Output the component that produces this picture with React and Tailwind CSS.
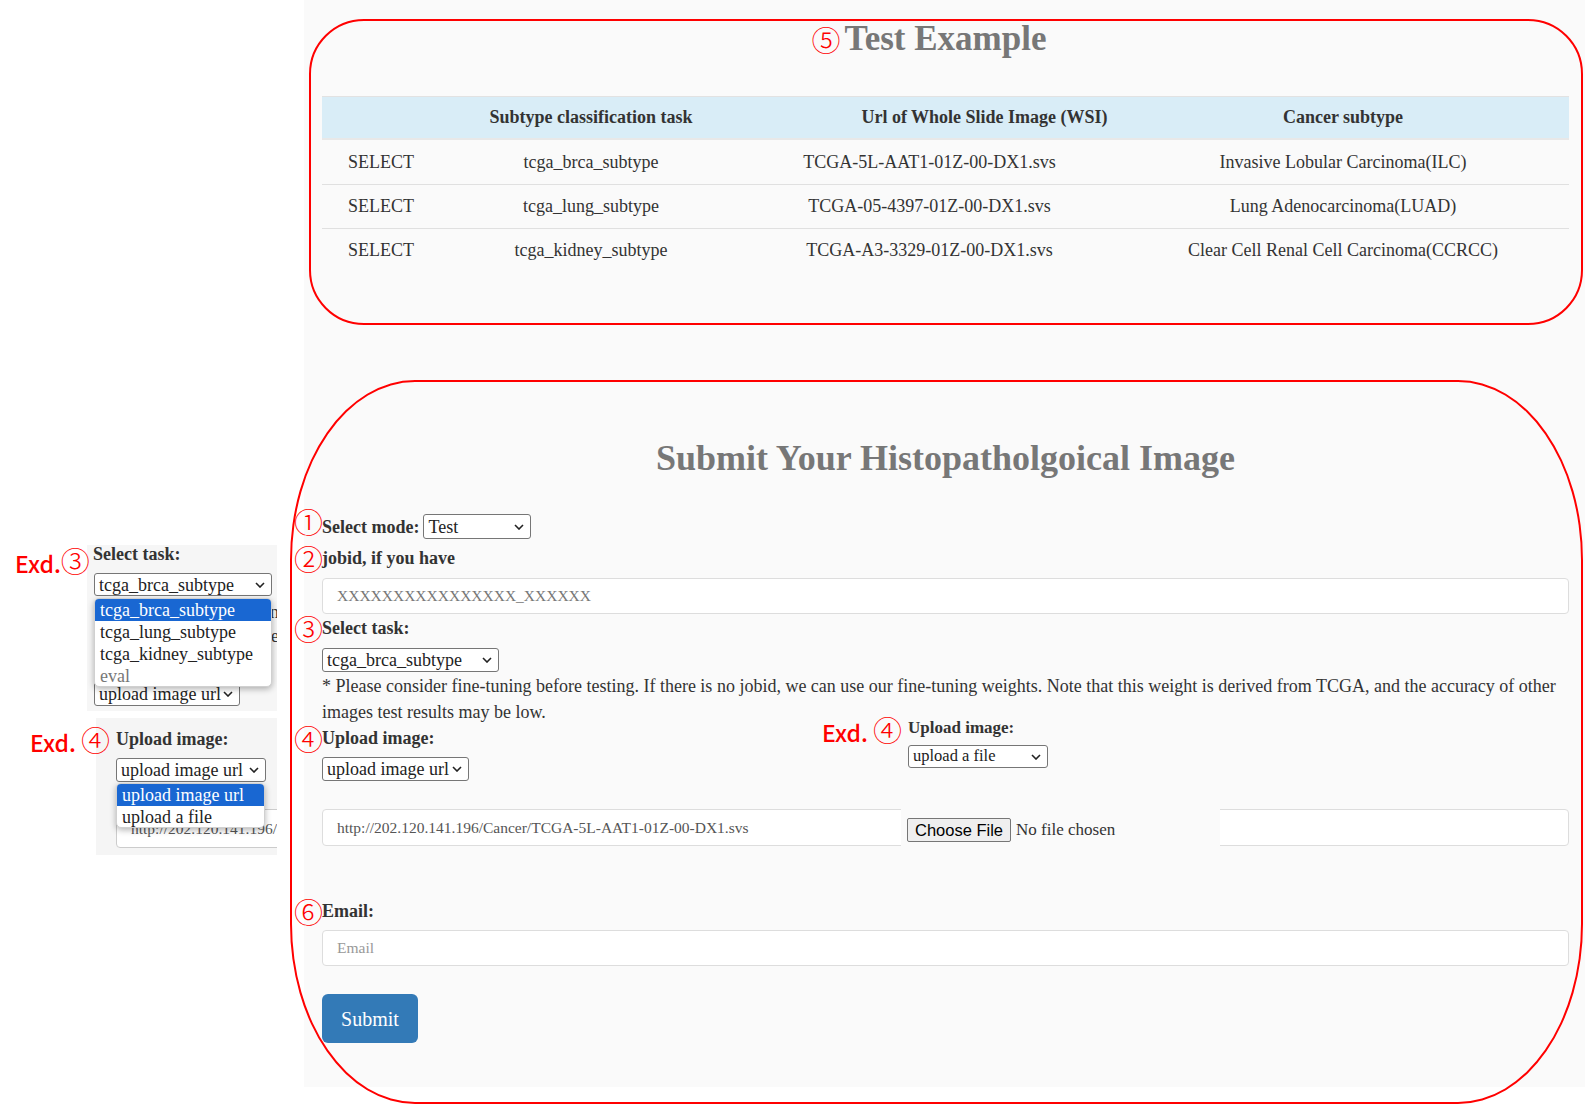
import React from "react";

const serif = "font-['Liberation_Serif',serif]";
const cjk = "font-['Noto_Sans_CJK_SC',sans-serif]";

const rows = [
  ["tcga_brca_subtype", "TCGA-5L-AAT1-01Z-00-DX1.svs", "Invasive Lobular Carcinoma(ILC)"],
  ["tcga_lung_subtype", "TCGA-05-4397-01Z-00-DX1.svs", "Lung Adenocarcinoma(LUAD)"],
  ["tcga_kidney_subtype", "TCGA-A3-3329-01Z-00-DX1.svs", "Clear Cell Renal Cell Carcinoma(CCRCC)"],
];

const Chevron = () => (
  <svg width="10" height="6" viewBox="0 0 10 6" className="shrink-0">
    <path d="M1 1l4 4 4-4" fill="none" stroke="#222" strokeWidth="1.6" />
  </svg>
);

const FakeSelect = ({ value, className = "" }) => (
  <div
    className={`flex items-center justify-between bg-white border border-[#767676] rounded-[3px] pl-[4px] pr-[6px] leading-none text-[#222] ${className}`}
  >
    <span>{value}</span>
    <Chevron />
  </div>
);

const Num = ({ n, className = "" }) => (
  <span
    className={`absolute right-full -mr-[1px] top-1/2 -translate-y-1/2 text-[#ff0000] ${cjk} font-light text-[29px] leading-none ${className}`}
  >
    {n}
  </span>
);

const Label = ({ n, children, className = "", numClass = "" }) => (
  <div className={`relative w-fit font-bold text-[18px] leading-[24px] text-[#333] ${className}`}>
    <Num n={n} className={numClass} />
    {children}
  </div>
);

const Exd = ({ n, spaced, className = "" }) => (
  <span className={`text-[#ff0000] ${cjk} font-medium text-[23px] leading-none whitespace-nowrap ${className}`}>
    Exd.{spaced ? " " : ""}
    <span className="text-[29px] font-light">{n}</span>
  </span>
);

const Option = ({ children, active, muted }) => (
  <div
    className={`h-[22px] leading-[22px] pl-[5px] ${
      active ? "bg-[#1967d2] text-white" : muted ? "text-[#777]" : "text-[#222]"
    }`}
  >
    {children}
  </div>
);

export default function App() {
  return (
    <div className={`relative w-[1585px] h-[1106px] bg-white overflow-hidden flex ${serif}`}>
      {/* left column: pasted dropdown snippets */}
      <div className="w-[304px] shrink-0" />

      {/* page */}
      <div className="w-[1281px] h-[1087px] bg-[#fafafa] pl-[18px] pr-[16px] text-[#333]">
        {/* Test Example */}
        <h2 className="pt-[19px] text-center text-[35px] leading-[40px] font-bold text-[#777]">
          <span className="relative">
            <span className={`absolute right-full mr-[4px] top-1/2 -translate-y-1/2 text-[#ff0000] ${cjk} font-light text-[29px] leading-none`}>
              ⑤
            </span>
            Test Example
          </span>
        </h2>

        <div className="mt-[37px] text-[18px]">
          <div className="grid grid-cols-[118px_302px_375px_452px] h-[44px] items-center bg-[#d9edf7] border-t border-[#e2e2e2] border-b-2 border-b-[#e8e8e8] font-bold">
            <div />
            <div className="text-center">Subtype classification task</div>
            <div className="text-center pl-[110px]">Url of Whole Slide Image (WSI)</div>
            <div className="text-center">Cancer subtype</div>
          </div>
          {rows.map((r, i) => (
            <div
              key={i}
              className={`grid grid-cols-[118px_302px_375px_452px] h-[44px] items-center ${
                i > 0 ? "border-t border-[#e0e0e0]" : ""
              }`}
            >
              <div className="pl-[26px]">SELECT</div>
              <div className="text-center">{r[0]}</div>
              <div className="text-center">{r[1]}</div>
              <div className="text-center">{r[2]}</div>
            </div>
          ))}
        </div>

        {/* Submit form */}
        <h1 className="mt-[166px] text-center text-[36px] leading-[40px] font-bold text-[#777]">
          Submit Your Histopatholgoical Image
        </h1>

        <div className="mt-[36px] flex items-center gap-[4px]">
          <Label n="①" numClass="-mt-[6px]">Select mode:</Label>
          <FakeSelect value="Test" className="w-[108px] h-[25px] text-[18px]" />
        </div>

        <Label n="②" className="mt-[7px]">jobid, if you have</Label>
        <div className="mt-[8px] h-[36px] flex items-center bg-white border border-[#ddd] rounded-[4px] pl-[14px] text-[15.5px] text-[#777]">
          XXXXXXXXXXXXXXXX_XXXXXX
        </div>

        <Label n="③" className="mt-[2px]">Select task:</Label>
        <FakeSelect value="tcga_brca_subtype" className="mt-[8px] w-[177px] h-[24px] text-[18px]" />
        <p className="text-[18px] leading-[26px] mt-[1px]">
          * Please consider fine-tuning before testing. If there is no jobid, we can use our fine-tuning weights. Note
          that this weight is derived from TCGA, and the accuracy of other images test results may be low.
        </p>

        <Label n="④" className="mt-[1px]">Upload image:</Label>
        <FakeSelect value="upload image url" className="mt-[7px] w-[147px] h-[24px] text-[18px]" />

        <div className="mt-[28px] h-[37px] flex items-center bg-white border border-[#ddd] rounded-[4px] pl-[14px] text-[15.5px] text-[#555]">
          http://202.120.141.196/Cancer/TCGA-5L-AAT1-01Z-00-DX1.svs
        </div>

        <Label n="⑥" className="mt-[53px]">Email:</Label>
        <div className="mt-[7px] h-[36px] flex items-center bg-white border border-[#ddd] rounded-[4px] pl-[14px] text-[15.5px] text-[#999]">
          Email
        </div>

        <button className="mt-[28px] w-[96px] h-[49px] bg-[#337ab7] rounded-[6px] text-white text-[20px]">
          Submit
        </button>
      </div>

      {/* pasted snippet: Exd.④ upload a file */}
      <div className="absolute left-[822px] top-[715px] flex items-start">
        <Exd n="④" spaced className="w-[86px] block" />
        <div className="flex flex-col">
          <div className="font-bold text-[17px] leading-[24px] text-[#333] mt-[1px]">Upload image:</div>
          <FakeSelect value="upload a file" className="mt-[5px] w-[140px] h-[23px] text-[16.5px]" />
        </div>
      </div>

      {/* pasted snippet: file chooser */}
      <div className="absolute left-[901px] top-[805px] w-[319px] h-[45px] bg-[#fafafa] flex items-start pt-[13px] pl-[6px] gap-[5px]">
        <div className="h-[24px] flex items-center bg-[#efefef] border border-[#767676] rounded-[2px] px-[7px] font-['Liberation_Sans',sans-serif] text-[16.5px] text-black">
          Choose File
        </div>
        <span className="text-[17px] leading-[24px] text-[#333]">No file chosen</span>
      </div>

      {/* left snippet: Exd.③ */}
      <div className="absolute left-[87px] top-[545px] w-[190px] h-[166px] bg-[#f6f6f6] overflow-hidden pl-[7px]">
        <div className="font-bold text-[18px] leading-[22px] text-[#333] -mt-[2px] -ml-[1px]">Select task:</div>
        <FakeSelect value="tcga_brca_subtype" className="mt-[8px] w-[178px] h-[23px] text-[18px]" />
        <div className="relative z-10 mt-[2px] w-[178px] h-[89px] bg-white rounded-[5px] overflow-hidden border border-[#d0d0d0] shadow-[0_2px_6px_rgba(0,0,0,0.3)] text-[18px]">
          <Option active>tcga_brca_subtype</Option>
          <Option>tcga_lung_subtype</Option>
          <Option>tcga_kidney_subtype</Option>
          <Option muted>eval</Option>
        </div>
        <FakeSelect value="upload image url" className="-mt-[5px] w-[146px] h-[24px] text-[18px]" />
        <span className="absolute left-[183px] top-[54px] text-[18px] text-[#333]">n</span>
        <span className="absolute left-[184px] top-[78px] text-[18px] text-[#333]">e</span>
      </div>
      <Exd n="③" className="absolute left-[15px] top-[546px] z-20" />

      {/* left snippet: Exd.④ */}
      <div className="absolute left-[96px] top-[718px] w-[181px] h-[137px] bg-[#f5f5f5] overflow-hidden pl-[20px]">
        <div className="font-bold text-[18px] leading-[22px] text-[#333] mt-[10px]">Upload image:</div>
        <FakeSelect value="upload image url" className="mt-[8px] w-[150px] h-[24px] text-[18px]" />
        <div className="relative z-10 mt-[1px] w-[149px] h-[45px] bg-white rounded-[5px] overflow-hidden border border-[#d0d0d0] shadow-[0_2px_6px_rgba(0,0,0,0.3)] text-[18px]">
          <Option active>upload image url</Option>
          <Option>upload a file</Option>
        </div>
        <div className="-mt-[19px] w-[200px] h-[39px] flex items-center bg-white border border-[#ccc] rounded-[4px] pl-[14px] text-[15.5px] text-[#555] whitespace-nowrap">
          http://202.120.141.196/Cancer
        </div>
      </div>
      <Exd n="④" spaced className="absolute left-[30px] top-[725px] z-20" />

      {/* red annotation frames */}
      <div className="absolute left-[309px] top-[19px] w-[1274px] h-[306px] border-2 border-[#ff0000] rounded-[55px] pointer-events-none" />
      <div className="absolute left-[290px] top-[380px] w-[1293px] h-[724px] border-2 border-[#ff0000] rounded-[125px/180px] pointer-events-none" />
    </div>
  );
}
